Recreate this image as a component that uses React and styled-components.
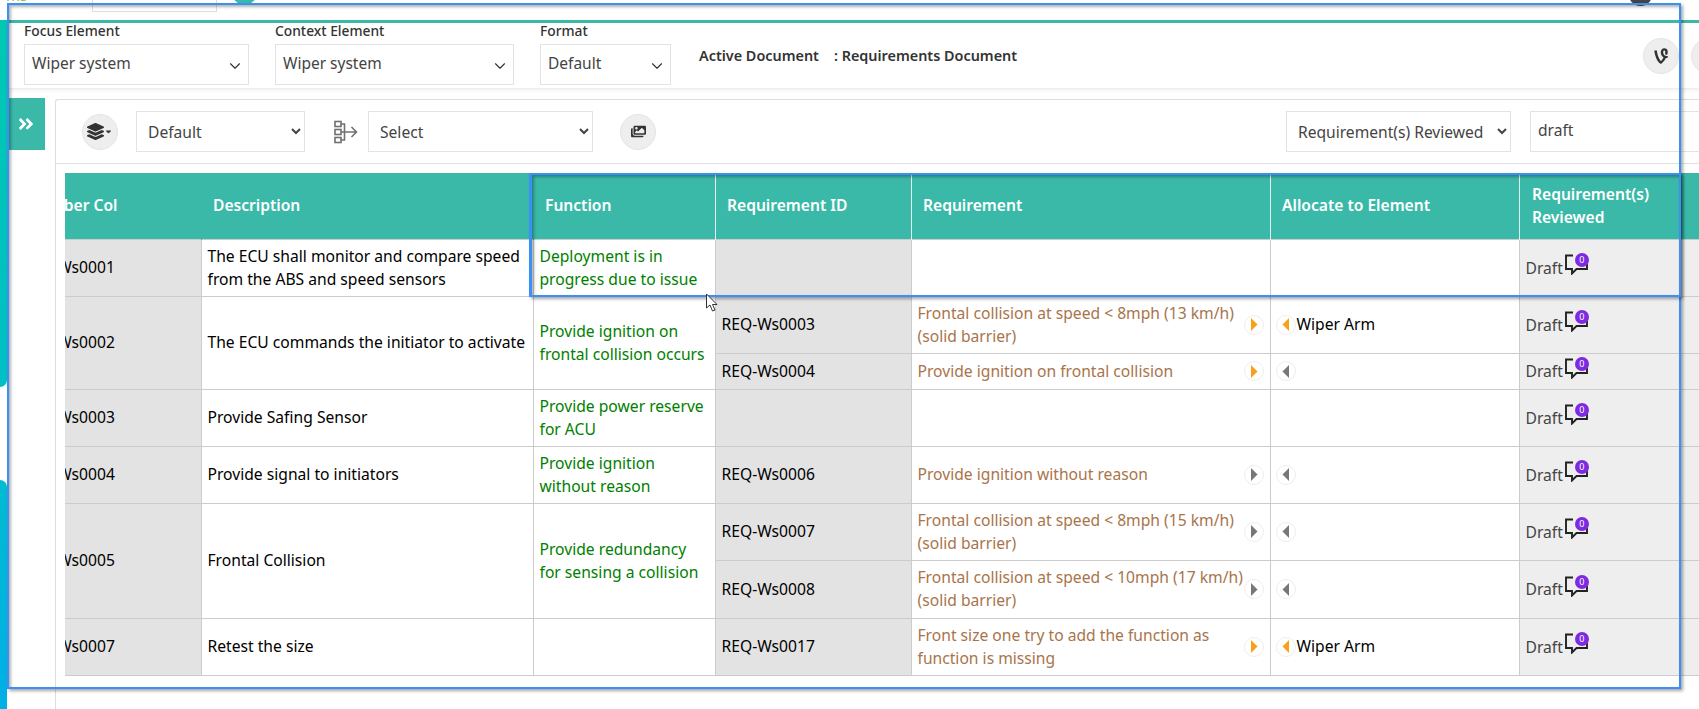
import React from "react";
import styled, { createGlobalStyle } from "styled-components";
import { ChevronDown } from "lucide-react";
import { FaVine, FaLayerGroup, FaImages, FaAngleDoubleRight, FaCaretDown } from "react-icons/fa";

const Global = createGlobalStyle`
  html, body { margin: 0; padding: 0; background: #fff; overflow: hidden; }
  body { font-family: "Noto Sans", "Open Sans", sans-serif; color: #333; }
  * { box-sizing: border-box; }
`;

const TEAL = "#3ab9a9";

const Page = styled.div`
  position: relative;
  width: 1699px;
  height: 709px;
  overflow: hidden;
  display: flex;
  flex-direction: column;
`;

const TopStrip = styled.div`
  height: 20px;
  flex: none;
  display: flex;
  overflow: hidden;
`;
const TopMark = styled.span`
  width: 92px;
  flex: none;
  padding-left: 6px;
  margin-top: -15px;
  font-size: 15px;
  line-height: 20px;
  color: #8bc34a;
`;
const TopBox = styled.div`
  width: 125px;
  height: 12px;
  flex: none;
  border: 1px solid #ddd;
  border-top: 0;
`;
const TopDot = styled.div`
  width: 25px;
  height: 25px;
  flex: none;
  margin: -20px 0 0 15px;
  border-radius: 50%;
  background: ${TEAL};
`;
const TopAvatar = styled.div`
  width: 23px;
  height: 22px;
  flex: none;
  margin: -16px 0 0 auto;
  border-radius: 50%;
  background: #444;
`;
const TopUser = styled.span`
  width: 28px;
  flex: none;
  margin: -14px 0 0 19px;
  font-size: 12px;
  line-height: 17px;
  color: #555;
  white-space: nowrap;
`;

const Body = styled.div`
  flex: 1;
  display: flex;
  min-height: 0;
`;

const Rail = styled.div`
  width: 7px;
  flex: none;
  display: flex;
  flex-direction: column;
  justify-content: space-between;
`;
const RailUpper = styled.div`
  height: 367px;
  background: linear-gradient(#00c8b0, #00c0c4);
  border-bottom-right-radius: 7px;
`;
const RailLower = styled.div`
  height: 229px;
  background: linear-gradient(#00bcd0, #00afe6);
  border-top-right-radius: 7px;
`;

const Main = styled.div`
  flex: 1;
  min-width: 0;
  display: flex;
  flex-direction: column;
`;

const FilterPanel = styled.div`
  height: 69px;
  flex: none;
  display: flex;
  align-items: flex-start;
  padding-left: 17px;
  border-top: 3px solid ${TEAL};
  border-bottom: 1px solid #eee;
  box-shadow: 0 2px 3px rgba(0, 0, 0, 0.05);
`;
const Field = styled.div`
  width: ${(p) => p.$w}px;
  flex: none;
  margin-right: 26px;
`;
const FieldLabel = styled.div`
  height: 16px;
  margin-bottom: 5px;
  font-size: 13.8px;
  line-height: 16px;
  font-weight: 500;
  color: #333;
  white-space: nowrap;
`;
const SelectBox = styled.div`
  height: 41px;
  display: flex;
  align-items: center;
  justify-content: space-between;
  padding: 0 4px 0 7px;
  border: 1px solid #e3e3e3;
  font-size: 15.5px;
  color: #444;
`;
const SelectValue = styled.span`
  margin-top: -4px;
`;
const Chevron = styled(ChevronDown)`
  margin-top: 3px;
  color: #333;
`;
const ActiveDoc = styled.div`
  display: flex;
  flex: none;
  margin: 23px 0 0 2px;
  font-size: 14.4px;
  line-height: 20px;
  font-weight: 600;
  color: #333;
`;
const ActiveValue = styled.span`
  margin-left: 15px;
`;
const RoundGroup = styled.div`
  display: flex;
  gap: 12px;
  flex: none;
  margin: 15px -28px 0 auto;
`;
const RoundButton = styled.div`
  width: 36px;
  height: 36px;
  flex: none;
  display: flex;
  align-items: center;
  justify-content: center;
  gap: 1px;
  margin-left: ${(p) => p.$ml || 0}px;
  border-radius: 50%;
  background: #eee;
  border: 1px solid #e4e4e4;
  color: #333;
  font-size: ${(p) => p.$size || 15}px;
`;

const Work = styled.div`
  flex: 1;
  min-height: 0;
  display: flex;
  align-items: flex-start;
  margin-top: 9px;
`;
const ExpandTab = styled.div`
  width: 38px;
  height: 52px;
  flex: none;
  display: flex;
  align-items: center;
  justify-content: center;
  background: ${TEAL};
  color: #fff;
  font-size: 18px;
`;
const Card = styled.div`
  flex: 1;
  min-width: 0;
  align-self: stretch;
  margin: 1px 0 0 10px;
  border-left: 1px solid #ddd;
  border-top: 1px solid #ddd;
  border-top-left-radius: 3px;
  display: flex;
  flex-direction: column;
  overflow: hidden;
`;
const Toolbar = styled.div`
  height: 64px;
  flex: none;
  display: flex;
  align-items: center;
  padding-left: 26px;
  border-bottom: 1px solid #e0e0e0;
`;
const NativeSelect = styled.select`
  width: ${(p) => p.$w}px;
  height: 41px;
  flex: none;
  margin: ${(p) => p.$m || 0};
  padding: 0 7px;
  background: #fff;
  border: 1px solid #e3e3e3;
  border-radius: 0;
  font-family: "Noto Sans", sans-serif;
  font-size: 15.6px;
  color: #444;
`;
const TextInput = styled.input`
  width: 190px;
  height: 41px;
  flex: none;
  margin: 0 -21px 0 19px;
  padding: 0 7px 3px;
  border: 1px solid #e3e3e3;
  font-family: "Noto Sans", sans-serif;
  font-size: 15.6px;
  color: #444;
`;
const FlowSvg = styled.svg`
  flex: none;
  margin-left: 29px;
`;

const TableWrap = styled.div`
  flex: 1;
  overflow: hidden;
  margin: 9px 0 0 9px;
`;
const Table = styled.table`
  table-layout: fixed;
  width: 1689px;
  margin-left: -50px;
  border-collapse: collapse;
  font-size: 15.65px;
  line-height: 23px;
`;
const HeadCell = styled.th`
  height: 66px;
  padding: 0 8px 0 ${(p) => p.$pl || 11}px;
  text-align: left;
  font-weight: 600;
  font-size: 15.6px;
  background: ${TEAL};
  color: #fff;
  border-right: 1px solid ${(p) => (p.$plain ? TEAL : "#e3f3f1")};
`;
const Cell = styled.td`
  padding: 0 ${(p) => p.$pr || 6}px 0 5.5px;
  border: 1px solid #ccc;
  vertical-align: middle;
  color: ${(p) => p.$color || "#000"};
  background: ${(p) => p.$bg || "#fff"};
  white-space: ${(p) => (p.$nowrap ? "nowrap" : "normal")};
  overflow: hidden;
`;
const Row = styled.tr`
  height: ${(p) => p.$h}px;
`;
const CellFlex = styled.div`
  display: flex;
  align-items: center;
  justify-content: ${(p) => (p.$between ? "space-between" : "flex-start")};
`;
const ReqText = styled.span`
  width: 326px;
  flex: none;
`;
const ElementName = styled.span`
  margin-left: 1px;
`;
const ArrowCircle = styled.span`
  width: 20px;
  height: 20px;
  flex: none;
  display: inline-flex;
  align-items: center;
  justify-content: center;
  border: 1px solid #eee;
  border-radius: 50%;
  background: #fff;
  margin-left: ${(p) => p.$ml || 0}px;
`;
const Commented = styled.span`
  position: relative;
  width: 24px;
  height: 22px;
  flex: none;
  margin: -7px 0 0 2px;
`;
const Badge = styled.span`
  position: absolute;
  top: 0;
  right: 0;
  width: 14px;
  height: 14px;
  border-radius: 50%;
  background: #7d2ae0;
  color: #fff;
  font-size: 9px;
  line-height: 14px;
  text-align: center;
`;
const DraftText = styled.span`
  color: #444;
  margin-top: 1px;
`;

const Outline = styled.div`
  position: absolute;
  left: ${(p) => p.$x}px;
  top: ${(p) => p.$y}px;
  width: ${(p) => p.$w}px;
  height: ${(p) => p.$h}px;
  border: 2px solid #3a90f5;
  border-left-width: ${(p) => p.$lw || 2}px;
  box-shadow: 2px 2px 3px rgba(0, 0, 0, 0.35), inset 2px 2px 3px rgba(0, 0, 0, 0.3);
  pointer-events: none;
`;
const Pointer = styled.svg`
  position: absolute;
  left: 705px;
  top: 293px;
`;

const Arrow = ({ dir, on }) => (
  <ArrowCircle $ml={dir === "left" ? -1 : 0}>
    <svg width="8" height="13" viewBox="0 0 8 13">
      <polygon
        points={dir === "right" ? "1,0 7.5,6.5 1,13" : "7,0 0.5,6.5 7,13"}
        fill={on ? "#f9a01b" : "#777"}
      />
    </svg>
  </ArrowCircle>
);

const Comment = () => (
  <Commented>
    <svg width="24" height="22" viewBox="0 0 24 22" fill="none">
      <path d="M8 2.5H1V16H7V20.5L11.5 16H22V11" stroke="#222" strokeWidth="1.9" />
    </svg>
    <Badge>0</Badge>
  </Commented>
);

const Draft = () => (
  <Cell $bg="#eee">
    <CellFlex>
      <DraftText>Draft</DraftText>
      <Comment />
    </CellFlex>
  </Cell>
);

const groups = [
  { id: "REQ-Ws0001", desc: "The ECU shall monitor and compare speed from the ABS and speed sensors", fn: "Deployment is in progress due to issue", reqs: [{ h: 57 }] },
  {
    id: "REQ-Ws0002", desc: "The ECU commands the initiator to activate", fn: "Provide ignition on frontal collision occurs",
    reqs: [
      { h: 57, id: "REQ-Ws0003", text: "Frontal collision at speed < 8mph (13 km/h) (solid barrier)", r: true, l: true, el: "Wiper Arm" },
      { h: 36, id: "REQ-Ws0004", text: "Provide ignition on frontal collision", r: true },
    ],
  },
  { id: "REQ-Ws0003", desc: "Provide Safing Sensor", fn: "Provide power reserve for ACU", reqs: [{ h: 57 }] },
  { id: "REQ-Ws0004", desc: "Provide signal to initiators", fn: "Provide ignition without reason", reqs: [{ h: 57, id: "REQ-Ws0006", text: "Provide ignition without reason" }] },
  {
    id: "REQ-Ws0005", desc: "Frontal Collision", fn: "Provide redundancy for sensing a collision",
    reqs: [
      { h: 57, id: "REQ-Ws0007", text: "Frontal collision at speed < 8mph (15 km/h) (solid barrier)" },
      { h: 58, id: "REQ-Ws0008", text: "Frontal collision at speed < 10mph (17 km/h) (solid barrier)" },
    ],
  },
  { id: "REQ-Ws0007", desc: "Retest the size", fn: "", reqs: [{ h: 57, id: "REQ-Ws0017", text: "Front size one try to add the function as function is missing", r: true, l: true, el: "Wiper Arm" }] },
];

const widths = [186, 332, 182, 196, 359, 249, 185];

export default function App() {
  return (
    <Page>
      <Global />
      <TopStrip>
        <TopMark>ms</TopMark>
        <TopBox />
        <TopDot />
        <TopAvatar />
        <TopUser>Subra</TopUser>
      </TopStrip>
      <Body>
        <Rail>
          <RailUpper />
          <RailLower />
        </Rail>
        <Main>
          <FilterPanel>
            <Field $w={225}>
              <FieldLabel>Focus Element</FieldLabel>
              <SelectBox><SelectValue>Wiper system</SelectValue><Chevron size={18} strokeWidth={1.5} /></SelectBox>
            </Field>
            <Field $w={239}>
              <FieldLabel>Context Element</FieldLabel>
              <SelectBox><SelectValue>Wiper system</SelectValue><Chevron size={18} strokeWidth={1.5} /></SelectBox>
            </Field>
            <Field $w={131}>
              <FieldLabel>Format</FieldLabel>
              <SelectBox><SelectValue>Default</SelectValue><Chevron size={18} strokeWidth={1.5} /></SelectBox>
            </Field>
            <ActiveDoc>
              Active Document<ActiveValue>: Requirements Document</ActiveValue>
            </ActiveDoc>
            <RoundGroup>
              <RoundButton $size={18}><FaVine /></RoundButton>
              <RoundButton />
            </RoundGroup>
          </FilterPanel>
          <Work>
            <ExpandTab><FaAngleDoubleRight /></ExpandTab>
            <Card>
              <Toolbar>
                <RoundButton $size={17}>
                  <FaLayerGroup />
                  <FaCaretDown size={9} style={{ marginLeft: -1 }} />
                </RoundButton>
                <NativeSelect $w={169} $m="0 0 0 18px" defaultValue="Default">
                  <option>Default</option>
                </NativeSelect>
                <FlowSvg width="24" height="26" viewBox="0 0 24 26" fill="none" stroke="#707070" strokeWidth="1.6">
                  <rect x="1" y="2.5" width="6" height="5" />
                  <rect x="1" y="10.5" width="6" height="5" />
                  <rect x="1" y="18.5" width="6" height="5" />
                  <path d="M7 5H10.5V21H7M7 13H22.5M17.5 8L22.5 13L17.5 18" />
                </FlowSvg>
                <NativeSelect $w={225} $m="0 0 0 10px" defaultValue="Select">
                  <option>Select</option>
                </NativeSelect>
                <RoundButton $ml={27}><FaImages /></RoundButton>
                <NativeSelect $w={225} $m="0 0 0 auto" defaultValue="Requirement(s) Reviewed">
                  <option>Requirement(s) Reviewed</option>
                </NativeSelect>
                <TextInput defaultValue="draft" />
              </Toolbar>
              <TableWrap>
                <Table>
                  <colgroup>
                    {widths.map((w, i) => <col key={i} style={{ width: w }} />)}
                  </colgroup>
                  <thead>
                    <tr>
                      <HeadCell $plain>Number Col</HeadCell>
                      <HeadCell $plain>Description</HeadCell>
                      <HeadCell>Function</HeadCell>
                      <HeadCell>Requirement ID</HeadCell>
                      <HeadCell>Requirement</HeadCell>
                      <HeadCell>Allocate to Element</HeadCell>
                      <HeadCell $pl={12}>Requirement(s) Reviewed</HeadCell>
                    </tr>
                  </thead>
                  <tbody>
                    {groups.map((g) =>
                      g.reqs.map((r, i) => (
                        <Row key={g.id + i} $h={r.h}>
                          {i === 0 && (
                            <>
                              <Cell rowSpan={g.reqs.length} $bg="#e3e3e3" $nowrap>{g.id}</Cell>
                              <Cell rowSpan={g.reqs.length}>{g.desc}</Cell>
                              <Cell rowSpan={g.reqs.length} $color="#008000" $pr={8}>{g.fn}</Cell>
                            </>
                          )}
                          <Cell $bg="#e3e3e3">{r.id}</Cell>
                          <Cell $color="#a9744a">
                            {r.id && (
                              <CellFlex $between>
                                <ReqText>{r.text}</ReqText>
                                <Arrow dir="right" on={r.r} />
                              </CellFlex>
                            )}
                          </Cell>
                          <Cell>
                            {r.id && (
                              <CellFlex>
                                <Arrow dir="left" on={r.l} />
                                <ElementName>{r.el}</ElementName>
                              </CellFlex>
                            )}
                          </Cell>
                          <Draft />
                        </Row>
                      ))
                    )}
                  </tbody>
                </Table>
              </TableWrap>
            </Card>
          </Work>
        </Main>
      </Body>
      <Outline $x={7} $y={3} $w={1674} $h={686} />
      <Outline $x={529} $y={173} $w={1152} $h={124} $lw={3} />
      <Pointer width="14" height="20" viewBox="0 0 14 20">
        <path d="M1.5 1V15L5 12L7.5 18L10 17L7.5 11.5H12Z" fill="#fff" stroke="#333" strokeWidth="1" />
      </Pointer>
    </Page>
  );
}
